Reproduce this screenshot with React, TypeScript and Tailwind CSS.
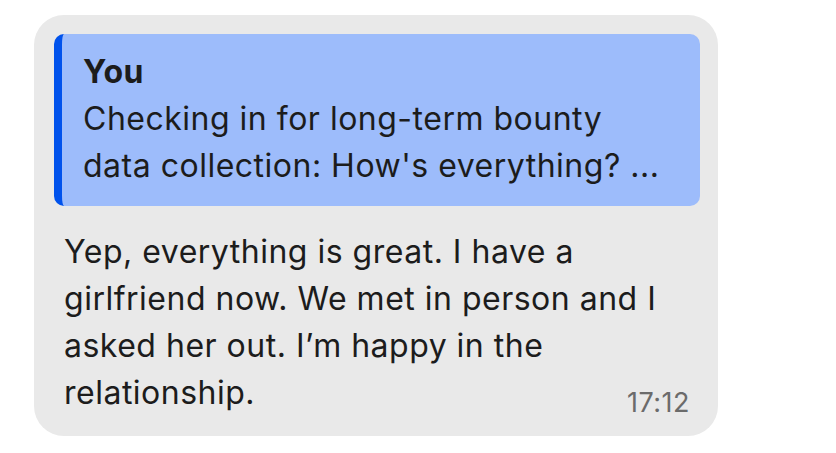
import React from 'react';

const App: React.FC = () => {
  return (
    <div className="w-[836px] h-[453px] bg-white pt-[15px] pl-[34px] font-['Inter',sans-serif] text-[#1c1c1c]">
      {/* Message bubble */}
      <div className="w-[684px] h-[421px] bg-[#e9e9e9] rounded-[30px] pt-[19px] pl-[20px] pr-[18px]">
        {/* Quoted reply */}
        <div className="bg-[#9dbcfb] rounded-[10px] border-l-[8px] border-[#0052ec] pl-[21px] pr-[30px] pt-[14px] pb-[17px] text-[32px] leading-[47px] tracking-[0.5px]">
          <div className="font-bold">You</div>
          <div>
            Checking in for long-term bounty
            <br />
            data collection: How's everything? ...
          </div>
        </div>

        {/* Body */}
        <div className="pl-[10px] pr-[10px] pt-[22px] text-[32px] leading-[47px] tracking-[0.5px]">
          <p>
            Yep, everything is great. I have a
            <br />
            girlfriend now. We met in person and I
            <br />
            asked her out. I’m happy in the
            <br />
            relationship.
          </p>
          <div className="flex justify-end -mt-[28px] text-[27px] leading-[30px] tracking-[0.5px] text-[#6b6b6b]">17:12</div>
        </div>
      </div>
    </div>
  );
};

export default App;
